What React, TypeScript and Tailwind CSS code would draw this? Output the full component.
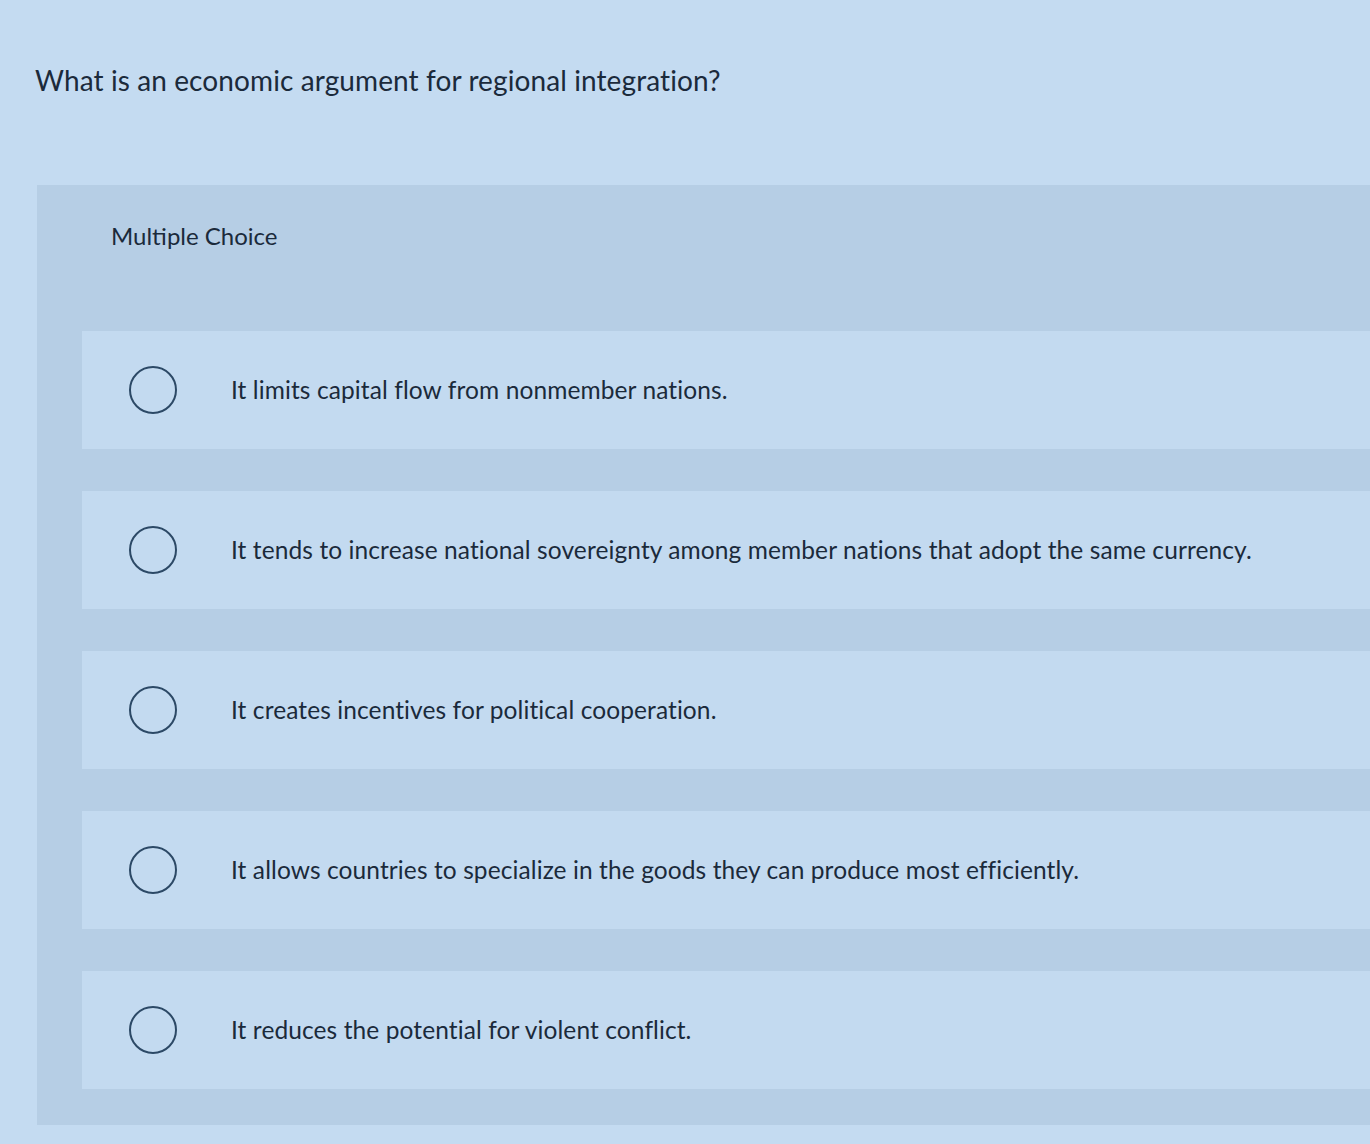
import React from 'react';

const options = [
  'It limits capital flow from nonmember nations.',
  'It tends to increase national sovereignty among member nations that adopt the same currency.',
  'It creates incentives for political cooperation.',
  'It allows countries to specialize in the goods they can produce most efficiently.',
  'It reduces the potential for violent conflict.',
];

const Radio: React.FC = () => (
  <span className="block w-[48px] h-[48px] rounded-full border-[2.5px] border-[#2c4966] shrink-0" />
);

const App: React.FC = () => {
  return (
    <div className="w-[1370px] h-[1144px] overflow-hidden bg-[#c4dbf1] text-[#1b2a3b] font-['Lato',sans-serif]">
      <div className="pt-[61px] pl-[35px]">
        <h1 className="text-[28px] leading-[38px] font-normal tracking-[0.1px]">What is an economic argument for regional integration?</h1>
      </div>
      <div className="mt-[86px] ml-[37px] bg-[#b6cee5] pb-[36px]">
        <div className="pl-[74px] pt-[36px] pb-[80px] text-[24px] leading-[30px]">Multiple Choice</div>
        <div className="flex flex-col gap-[42px] pl-[45px]">
          {options.map((opt) => (
            <div key={opt} className="h-[118px] bg-[#c3daf0] flex items-center">
              <div className="ml-[47px]">
                <Radio />
              </div>
              <span className="ml-[54px] text-[24.5px] leading-[30px] tracking-[0.1px]">{opt}</span>
            </div>
          ))}
        </div>
      </div>
    </div>
  );
};

export default App;
